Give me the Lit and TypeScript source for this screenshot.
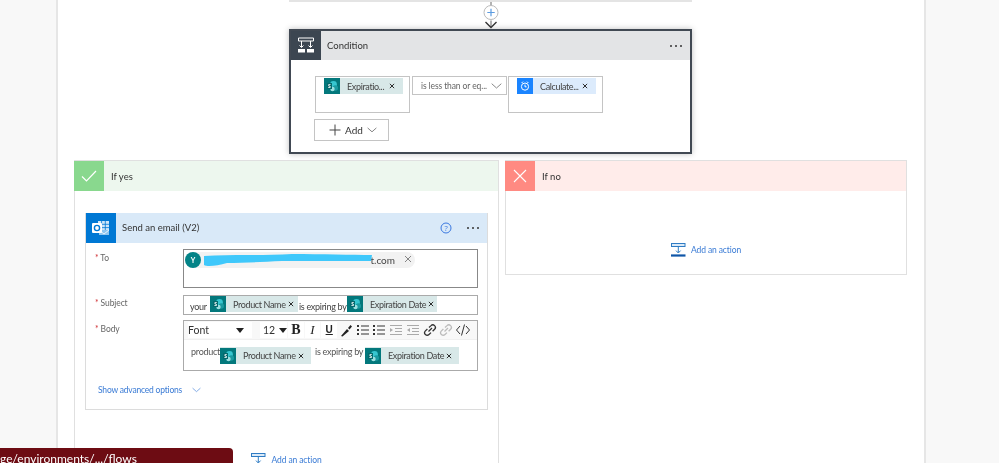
import { LitElement, html, css, svg } from "lit";
import { customElement } from "lit/decorators.js";

const spIcon = html`<svg class="ticon" viewBox="0 0 16 16"><rect width="16" height="16" fill="#03787c"/><circle cx="9.500" cy="6.500" r="3.400" fill="#37c6d0"/><circle cx="11.300" cy="10" r="2.700" fill="#1a9ba1"/><circle cx="8.500" cy="11" r="2.200" fill="#9ddfe0"/><rect x="3" y="5" width="5" height="6" fill="#05696d"/><text x="5.500" y="10" font-size="5" font-weight="700" text-anchor="middle" fill="#fff" font-family="Open Sans">S</text></svg>`;
const clockIcon = html`<svg class="ticon" viewBox="0 0 16 16"><rect width="16" height="16" fill="#1a84ff"/><circle cx="8" cy="8.600" r="3.600" fill="none" stroke="#fff" stroke-width="1"/><path d="M8 6.600V8.800H9.600M4.600 5 6 3.600M11.400 5 10 3.600" fill="none" stroke="#fff" stroke-width="1"/></svg>`;
const closeX = html`<svg class="x" viewBox="0 0 7 7"><path d="M1 1 6 6M6 1 1 6" stroke="#222" stroke-width="1.100"/></svg>`;
const chev = (c = "#888", w = 11) => html`<svg class="chev" width=${w} height="6" viewBox="0 0 11 6"><path d="M.7.7 5.500 5 10.300.7" fill="none" stroke=${c} stroke-width="1"/></svg>`;
const addIcon = html`<svg class="addicon" width="15" height="14" viewBox="0 0 15 14"><rect x=".5" y=".5" width="13.500" height="3" fill="#dcebf8" stroke="#2f7cc4"/><path d="M7.300 3.500V9.500" stroke="#2f7cc4"/><path d="M5 7.600 7.300 10 9.600 7.600" fill="none" stroke="#2f7cc4"/><rect y="11.400" width="14.500" height="2.200" fill="#0f56a8"/></svg>`;

const token = (label: string, w: number, textW: number, kind = "sp") => html`
  <span class="token ${kind}" style="width:${w}px">
    ${kind === "sp" ? spIcon : clockIcon}
    <span class="tlabel" style="width:${textW}px">${label}</span>${closeX}
  </span>`;

const tb = (inner: unknown, muted = false) => html`<span class="tile"><svg class="tool ${muted ? "muted" : ""}" width="16" height="14" viewBox="0 0 16 14">${inner}</svg></span>`;

const listLines = svg`<path d="M6 3H14M6 7H14M6 11H14" stroke="#333" stroke-width="1"/>`;
const dots = svg`<path d="M2 2H4V4H2ZM2 6H4V8H2ZM2 10H4V12H2Z" fill="#333"/>`;
const indentIc = svg`<path d="M2 2.500H14M7 5.500H14M7 8.500H14M2 11.500H14" stroke="#aaa" stroke-width="1"/><path d="M2 5 5 7 2 9Z" fill="#aaa"/>`;
const outdentIc = svg`<path d="M2 2.500H14M7 5.500H14M7 8.500H14M2 11.500H14" stroke="#aaa" stroke-width="1"/><path d="M5 5 2 7 5 9Z" fill="#aaa"/>`;
const linkIc = svg`<path d="M6.500 8.500 10 5M7 4.500 9 2.600C10 1.600 11.600 1.600 12.600 2.600 13.600 3.600 13.600 5.200 12.600 6.200L10.600 8.200M9 9.600 7 11.500C6 12.500 4.400 12.500 3.400 11.500 2.400 10.500 2.400 8.900 3.400 7.900L5.400 6" fill="none" stroke="#333" stroke-width="1.300"/>`;

@customElement("app-root")
export class AppRoot extends LitElement {
  static styles = css`
    :host { display: block; width: 999px; height: 463px; overflow: hidden; position: relative; background: #f8f8f8;
      font-family: "Lato", "Open Sans", sans-serif; color: #333; font-size: 9px; }
    .panel { margin-left: 56px; width: 870px; height: 463px; box-sizing: border-box; background: #fff;
      border-left: 2px solid #e6e6e6; border-right: 2px solid #e6e6e6; overflow: hidden; filter: blur(.3px); }
    .topcard { margin-left: 231px; width: 403px; height: 2px; background: #e4e4e4; }
    .connector { margin-left: 231px; width: 403px; height: 27px; display: flex; flex-direction: column; align-items: center; }
    .connector svg { display: block; }
    .cond { margin-left: 231px; width: 403px; height: 125px; box-sizing: border-box; border: 2px solid #414953; background: #fff;
      box-shadow: 0 0 6px rgba(0,0,0,.25); }
    .chead { height: 29px; display: flex; align-items: center; background: #e3e4e6; }
    .cicon { width: 30px; height: 29px; background: #3c4651; display: flex; align-items: center; justify-content: center; flex: none; }
    .ctitle { margin-left: 6px; flex: 1; font-size: 9.500px; color: #333; }
    .more { display: flex; gap: 3px; margin-right: 8px; }
    .more i { width: 2px; height: 2px; background: #333; border-radius: 50%; display: block; }
    .crow { display: flex; margin: 16px 0 0 24px; align-items: flex-start; }
    .cbox { width: 95px; height: 37px; box-sizing: border-box; border: 1px solid #c4c4c4; padding: 1px 0 0 8px; }
    .csel { width: 95px; height: 19px; box-sizing: border-box; border: 1px solid #c4c4c4; margin: 0 1px 0 2px; display: flex; align-items: center;
      justify-content: space-between; padding: 0 4px 0 8px; color: #666; font-size: 8.500px; letter-spacing: -.1px; white-space: nowrap; }
    .addbtn { margin: 6px 0 0 23px; width: 75px; height: 22px; box-sizing: border-box; border: 1px solid #c4c4c4; display: flex; align-items: center;
      padding-left: 14px; gap: 4px; font-size: 10px; color: #333; }
    .token { display: inline-flex; align-items: center; height: 16px; vertical-align: top; white-space: nowrap; flex: none; }
    .token.sp { background: #d8e8e8; }
    .token.clock { background: #dcebfc; }
    .ticon { width: 16px; height: 16px; flex: none; display: block; }
    .tlabel { margin-left: 7px; font-size: 9px; letter-spacing: -.35px; color: #444; flex: none; }
    .x { width: 6px; height: 6px; margin-left: 4px; flex: none; }
    .branches { display: flex; gap: 6px; margin: 6px 0 0 16px; align-items: flex-start; }
    .branch { box-sizing: border-box; border: 1px solid #e0e0e0; background: #fff; }
    .yes { width: 425px; height: 400px; }
    .no { width: 402px; height: 115px; }
    .bhead { height: 30px; display: flex; align-items: center; font-size: 9.500px; color: #333; margin-left: -1px; }
    .yes .bhead { background: #edf7ee; }
    .no .bhead { background: #ffecea; }
    .bicon { width: 30px; height: 30px; flex: none; display: flex; align-items: center; justify-content: center; margin-right: 7px; }
    .yes .bicon { background: #89d88e; }
    .no .bicon { background: #ff8a82; }
    .add { display: flex; align-items: center; justify-content: center; gap: 5px; color: #3a7bd5; font-size: 8.500px; letter-spacing: -.1px; }
    .no .add { margin-top: 52px; }
    .yes .add { margin-top: 43px; }
    .email { margin: 22px 0 0 10px; width: 403px; height: 197px; box-sizing: border-box; border: 1px solid #dcdcdc; border-top: none; }
    .ehead { height: 30px; display: flex; align-items: center; background: #d9e9f8; font-size: 9.500px; color: #333; }
    .eicon { width: 30px; height: 30px; background: #0078d4; flex: none; display: flex; align-items: center; justify-content: center; }
    .etitle { margin-left: 6px; flex: 1; margin-top: -1px; }
    .help { margin-right: 15px; display: block; }
    .fields { display: grid; grid-template-columns: 88px 295px; padding: 6px 0 0 9px; }
    .label { color: #666; font-size: 8.500px; letter-spacing: -.1px; padding-top: 4px; }
    .label b { color: #d13438; font-weight: 400; }
    .to { height: 39px; box-sizing: border-box; border: 1px solid #888; position: relative; padding: 2px 0 0 1px; }
    .chip { width: 230px; height: 16px; border-radius: 8px; background: #f2f2f2; display: flex; align-items: center; font-size: 10px; color: #444; position: relative; }
    .avatar { width: 16px; height: 16px; border-radius: 50%; background: #038387; color: #fff; font-size: 7px; font-weight: 700;
      display: flex; align-items: center; justify-content: center; flex: none; }
    .chip .mail { margin-left: auto; margin-right: 20px; }
    .scribble { position: absolute; left: 17px; top: 1px; }
    .chip svg.cx { position: absolute; right: 3px; top: 3px; }
    .subject { margin-top: 7px; height: 20px; box-sizing: border-box; border: 1px solid #aaa; display: flex; align-items: flex-start; padding: 0 0 0 6px; color: #444; font-size: 9px; letter-spacing: -.3px; white-space: nowrap; }
    .subject .t { margin-top: 5px; flex: none; }
    .w-your { width: 20px; }
    .w-mid { width: 48px; padding-left: 1px; }
    .sublabel { margin-top: 6px; }
    .bodylabel { margin-top: 5px; padding-top: 4px; }
    .body { margin-top: 5px; height: 51px; box-sizing: border-box; border: 1px solid #aaa; }
    .toolbar { height: 18px; display: flex; align-items: center; border-bottom: 1px solid #f0f0f0; padding-left: 4px; color: #333; background: #f8f8f8; }
    .font { width: 64px; height: 16px; background: #fff; font-size: 10.500px; display: flex; justify-content: space-between; align-items: center; padding-right: 8px; box-sizing: border-box; flex: none; }
    .caret { width: 0; height: 0; border-left: 4px solid transparent; border-right: 4px solid transparent; border-top: 5px solid #222; display: block; }
    .size { width: 27px; height: 16px; background: #fff; font-size: 10.500px; display: flex; align-items: center; gap: 4px; margin: 0 1px 0 8px; padding-left: 3px; box-sizing: border-box; flex: none; }
    .tile { display: block; width: 16.700px; height: 16px; flex: none; padding-top: 1px; box-sizing: border-box; }
    .tool { display: block; }
    .muted { opacity: .3; }
    .tg { width: 15.700px; height: 16px; margin-right: 1px; background: #fff; flex: none; text-align: center; font-size: 11px; line-height: 16px; color: #222; }
    .tg.b { font-family: "Liberation Serif", serif; font-weight: 700; font-size: 14px; }
    .tg.i { font-family: "Liberation Serif", serif; font-style: italic; font-size: 13px; }
    .tg.u { text-decoration: underline; font-family: "Liberation Sans", sans-serif; font-size: 10px; font-weight: 700; }
    .bodyrow { display: flex; align-items: flex-start; padding: 7px 0 0 7px; color: #555; font-size: 9px; letter-spacing: -.25px; white-space: nowrap; }
    .bodyrow .t { margin-top: -1px; flex: none; }
    .bodyrow .token { height: 17px; }
    .w-prod { width: 29px; }
    .w-mid2 { width: 50px; margin-left: 4px; }
    .adv { display: flex; align-items: center; gap: 10px; margin: 14px 0 0 12px; color: #3a7bd5; font-size: 8.500px; letter-spacing: -.2px; }
    .tip { position: absolute; left: 0; top: 448px; width: 233px; height: 24px; background: #6d0c13; color: #fff; border-radius: 0 4px 0 0;
      font-size: 12px; line-height: 22px; white-space: nowrap; overflow: hidden; filter: blur(.3px); }
  `;

  render() {
    const cb = svg`${dots}${listLines}`;
    return html`
      <div class="panel">
        <div class="topcard"></div>
        <div class="connector">
          <svg width="24" height="27" viewBox="0 0 24 27">
            <path d="M12 0V4M12 18.500V25" stroke="#666" stroke-width="1"/>
            <circle cx="12" cy="10.500" r="7" fill="#fff" stroke="#bbb"/>
            <path d="M12 6.800V14.200M8.300 10.500H15.700" stroke="#5b9be0" stroke-width="1.200"/>
            <path d="M6.500 20 12 25.500 17.500 20" fill="none" stroke="#333" stroke-width="1.400"/>
          </svg>
        </div>
        <div class="cond">
          <div class="chead">
            <div class="cicon">
              <svg width="18" height="17" viewBox="0 0 18 17"><path d="M1.500 1H16.500V4H1.500ZM4.500 4V10M13.500 4V10" fill="none" stroke="#fff"/><path d="M2.500 8.500 4.500 10.500 6.500 8.500M11.500 8.500 13.500 10.500 15.500 8.500" fill="none" stroke="#fff"/><path d="M1 12H8V15.500H1ZM10 12H17V15.500H10Z" fill="#fff"/></svg>
            </div>
            <div class="ctitle">Condition</div>
            <div class="more"><i></i><i></i><i></i></div>
          </div>
          <div class="crow">
            <div class="cbox">${token("Expiratio...", 79, 38)}</div>
            <div class="csel"><span>is less than or eq...</span>${chev()}</div>
            <div class="cbox">${token("Calculate...", 79, 38, "clock")}</div>
          </div>
          <div class="addbtn">
            <svg width="12" height="12" viewBox="0 0 12 12"><path d="M6 .5V11.500M.5 6H11.500" stroke="#444" stroke-width="1"/></svg>
            <span>Add</span>${chev("#777", 10)}
          </div>
        </div>
        <div class="branches">
          <div class="branch yes">
            <div class="bhead">
              <div class="bicon"><svg width="16" height="12" viewBox="0 0 16 12"><path d="M1 6.500 5.500 11 15 1" fill="none" stroke="#fff" stroke-width="1.200"/></svg></div>
              If yes
            </div>
            <div class="email">
              <div class="ehead">
                <div class="eicon">
                  <svg width="20" height="18" viewBox="0 0 20 18"><path d="M7 2H18V12H7Z" fill="#cfe6f8"/><path d="M7 5.300H18M7 8.600H18M10.600 2V12M14.300 2V12" stroke="#0078d4" stroke-width=".8"/><path d="M8 11 18 11 18 16 8 16Z" fill="#8fc6f0"/><path d="M8 11 13 15 18 11" fill="none" stroke="#fff" stroke-width=".8"/><rect x="1" y="4" width="10" height="10" rx="1" fill="#fff"/><circle cx="6" cy="9" r="2.600" fill="none" stroke="#0078d4" stroke-width="1.400"/></svg>
                </div>
                <div class="etitle">Send an email (V2)</div>
                <svg class="help" width="12" height="12" viewBox="0 0 12 12"><circle cx="6" cy="6" r="5" fill="none" stroke="#3a78e0"/><text x="6" y="8.600" text-anchor="middle" font-size="7.500" fill="#3a78e0" font-family="Open Sans">?</text></svg>
                <div class="more"><i></i><i></i><i></i></div>
              </div>
              <div class="fields">
                <div class="label"><b>*</b> To</div>
                <div class="to">
                  <div class="chip">
                    <span class="avatar">Y</span>
                    <span class="mail">t.com</span>
                    <svg class="scribble" width="172" height="15" viewBox="0 0 172 15"><path d="M2 3C30 1 60 3 90 1C120 1 150 2 170 2L169 8C140 8 110 8 80 8C60 9 40 10 25 10C15 13 5 14 2 12Z" fill="#3fc8fb"/></svg>
                    <svg class="cx" width="8" height="8" viewBox="0 0 8 8"><path d="M1 1 7 7M7 1 1 7" stroke="#777" stroke-width=".9"/></svg>
                  </div>
                </div>
                <div class="label sublabel"><b>*</b> Subject</div>
                <div class="subject">
                  <span class="t w-your">your</span>${token("Product Name", 88, 51)}<span class="t w-mid">is expiring by</span>${token("Expiration Date", 90, 54)}
                </div>
                <div class="label bodylabel"><b>*</b> Body</div>
                <div class="body">
                  <div class="toolbar">
                    <div class="font"><span>Font</span><span class="caret"></span></div>
                    <div class="size"><span>12</span><span class="caret"></span></div>
                    <span class="tg b">B</span><span class="tg i">I</span><span class="tg u">U</span>
                    ${tb(svg`<path d="M3 13 9 6 11 8 4.500 13.500ZM10 5 12.500 2 14 3.500 11.500 6.500Z" fill="#222"/>`)}
                    ${tb(cb)}${tb(cb)}${tb(indentIc)}${tb(outdentIc)}${tb(linkIc)}${tb(linkIc, true)}
                    ${tb(svg`<path d="M5 3 1.500 7 5 11M11 3 14.500 7 11 11M9.500 1.500 6.500 12.500" fill="none" stroke="#333" stroke-width="1"/>`)}
                  </div>
                  <div class="bodyrow">
                    <span class="t w-prod">product</span>${token("Product Name", 91, 51)}<span class="t w-mid2">is expiring by</span>${token("Expiration Date", 94, 54)}
                  </div>
                </div>
              </div>
              <div class="adv"><span>Show advanced options</span>${chev("#6a9be0", 9)}</div>
            </div>
            <div class="add">${addIcon}<span>Add an action</span></div>
          </div>
          <div class="branch no">
            <div class="bhead">
              <div class="bicon"><svg width="14" height="14" viewBox="0 0 14 14"><path d="M1 1 13 13M13 1 1 13" stroke="#fff" stroke-width="1.100"/></svg></div>
              If no
            </div>
            <div class="add">${addIcon}<span>Add an action</span></div>
          </div>
        </div>
      </div>
      <div class="tip">ge/environments/.../flows</div>
    `;
  }
}
